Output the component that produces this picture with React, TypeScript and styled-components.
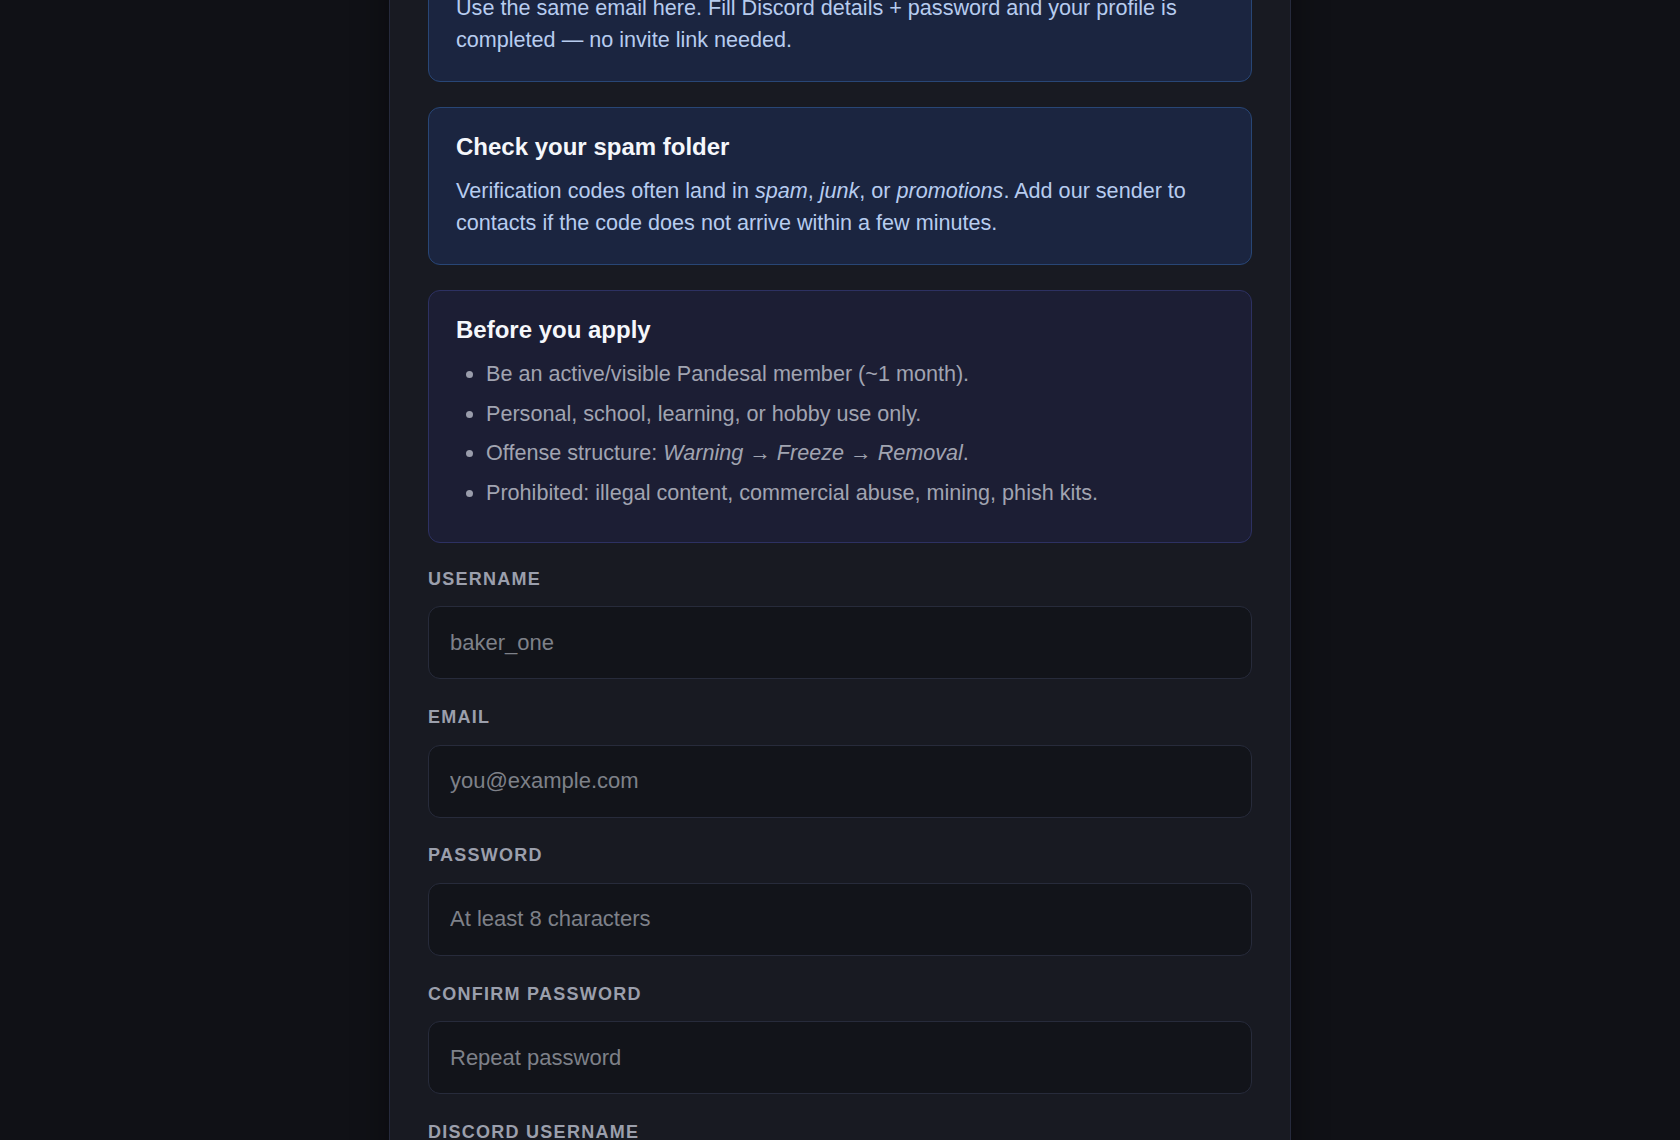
import React from 'react'
import styled, { createGlobalStyle, css } from 'styled-components'

const GlobalStyle = createGlobalStyle`
  * {
    box-sizing: border-box;
  }

  html,
  body {
    margin: 0;
    padding: 0;
    background: #101116;
    font-family: 'Liberation Sans', Arial, Helvetica, sans-serif;
    color: #e6e8ee;
  }
`

// Page background holding the centred panel
const StyledPage = styled.div`
  display: flex;
  justify-content: center;
  min-height: 100vh;
  background: #101116;
`

// The signup panel (scrolled: its top sits above the viewport)
const StyledPanel = styled.main`
  width: 902px;
  margin-top: -115px;
  padding: 38px 38px 60px;
  background: #181a22;
  border: 1px solid #262a3c;
  border-radius: 20px;
  box-shadow: 0 0 36px rgba(0, 0, 0, 0.45);
`

type Tone = 'info' | 'rules'

// A rounded notice card, blue for info, indigo for the rules
const StyledCard = styled.section<{ $tone: Tone }>`
  ${({ $tone }) => {
    return css`
      margin-bottom: 25px;
      padding: 24px 27px ${$tone === 'info' ? '25px' : '26px'};
      border-radius: 12px;
      border: 1px solid ${$tone === 'info' ? '#284676' : '#2d3162'};
      background: ${$tone === 'info' ? '#1b2540' : '#1c1e34'};
    `
  }}
`

const StyledCardTitle = styled.h3`
  margin: 0 0 13px;
  font-size: 24px;
  line-height: 30px;
  font-weight: 700;
  color: #f5f7fb;
`

const StyledCardText = styled.p`
  margin: 0;
  font-size: 21.6px;
  line-height: 32px;
  color: #b7ccef;

  em {
    font-style: italic;
  }
`

const StyledRuleList = styled.ul`
  margin: 0;
  padding-left: 30px;
  font-size: 21.6px;
  line-height: 32px;
  color: #a1a4b1;
`

const StyledRule = styled.li`
  margin-bottom: 7.5px;

  &::marker {
    color: #9a9dab;
  }
`

// A label + input pair of the form
const StyledField = styled.div`
  display: flex;
  flex-direction: column;
  margin-top: 26.8px;

  &:first-of-type {
    margin-top: 25px;
  }
`

const StyledLabel = styled.label`
  margin-bottom: 15px;
  font-size: 18px;
  line-height: 23.4px;
  font-weight: 700;
  letter-spacing: 0.07em;
  text-transform: uppercase;
  color: #9b9fac;
`

const StyledInput = styled.input`
  height: 73px;
  padding: 0 21px;
  border: 1px solid #272b3b;
  border-radius: 12px;
  background: #12141a;
  font-family: inherit;
  font-size: 22px;
  color: #e6e8ee;
  outline: none;

  &::placeholder {
    color: #7e8189;
  }
`

const fields = [
  { id: 'username', label: 'Username', placeholder: 'baker_one', type: 'text' },
  { id: 'email', label: 'Email', placeholder: 'you@example.com', type: 'email' },
  { id: 'password', label: 'Password', placeholder: 'At least 8 characters', type: 'password' },
  { id: 'confirm', label: 'Confirm password', placeholder: 'Repeat password', type: 'password' },
  { id: 'discord', label: 'Discord username', placeholder: 'yourname', type: 'text' },
]

export default function App() {
  return (
    <>
      <GlobalStyle />
      <StyledPage>
        <StyledPanel>
          <StyledCard $tone="info">
            <StyledCardTitle>Already registered on the website?</StyledCardTitle>
            <StyledCardText>
              Use the same email here. Fill Discord details + password and your profile is
              completed — no invite link needed.
            </StyledCardText>
          </StyledCard>

          <StyledCard $tone="info">
            <StyledCardTitle>Check your spam folder</StyledCardTitle>
            <StyledCardText>
              Verification codes often land in <em>spam</em>, <em>junk</em>, or{' '}
              <em>promotions</em>. Add our sender to contacts if the code does not arrive within a
              few minutes.
            </StyledCardText>
          </StyledCard>

          <StyledCard $tone="rules">
            <StyledCardTitle>Before you apply</StyledCardTitle>
            <StyledRuleList>
              <StyledRule>Be an active/visible Pandesal member (~1 month).</StyledRule>
              <StyledRule>Personal, school, learning, or hobby use only.</StyledRule>
              <StyledRule>
                Offense structure: <em>Warning → Freeze → Removal</em>.
              </StyledRule>
              <StyledRule>
                Prohibited: illegal content, commercial abuse, mining, phish kits.
              </StyledRule>
            </StyledRuleList>
          </StyledCard>

          {fields.map((field) => (
            <StyledField key={field.id}>
              <StyledLabel htmlFor={field.id}>{field.label}</StyledLabel>
              <StyledInput id={field.id} type={field.type} placeholder={field.placeholder} />
            </StyledField>
          ))}
        </StyledPanel>
      </StyledPage>
    </>
  )
}
